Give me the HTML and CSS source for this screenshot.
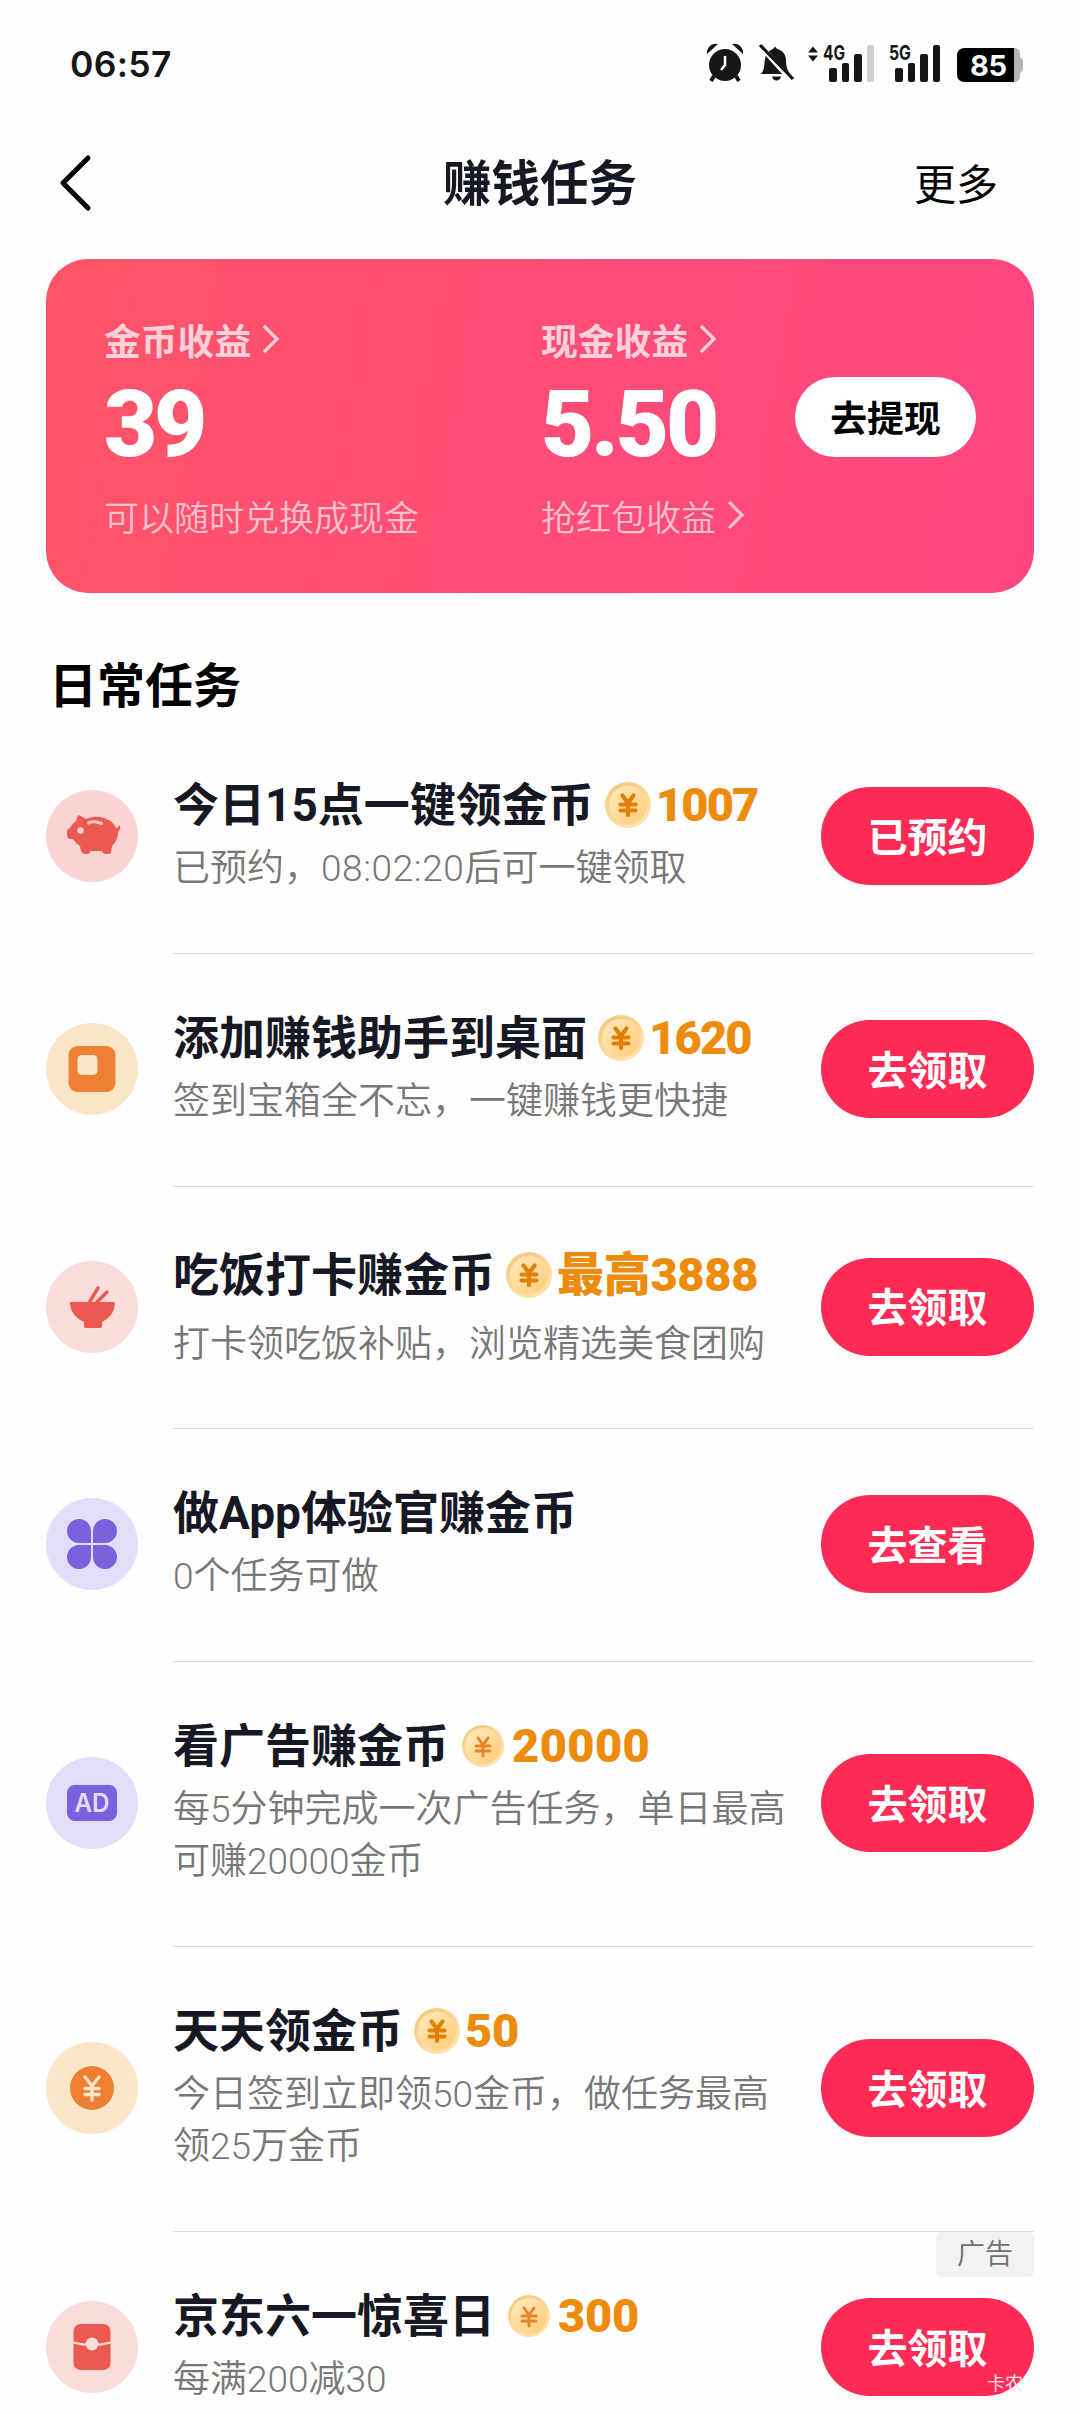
FILE: index.html
```
<!DOCTYPE html>
<html lang="zh-CN">
<head>
<meta charset="utf-8">
<title>赚钱任务</title>
<link rel="stylesheet" href="styles.css">
</head>
<body>
<svg class="defs" width="0" height="0">
  <defs>
    <linearGradient id="coinFace" x1="0" y1="0" x2="1" y2="1">
      <stop offset="0" stop-color="#ffe9bd"/><stop offset="1" stop-color="#ffcb78"/>
    </linearGradient>
    <linearGradient id="coinRim" x1="0" y1="0" x2="0.6" y2="1">
      <stop offset="0" stop-color="#f4c679"/><stop offset="1" stop-color="#ffe3ab"/>
    </linearGradient>
    <symbol id="coin" viewBox="0 0 46 46">
      <circle cx="23" cy="23" r="23" fill="url(#coinRim)"/>
      <circle cx="23" cy="23" r="19" fill="url(#coinFace)"/>
      <path d="M17.500 13.500L23 21L28.500 13.500M15.500 22.500H30.500M15.500 28.500H30.500M23 21V33" fill="none" stroke="#e08008" stroke-width="4.200" stroke-linecap="round" stroke-linejoin="round"/>
    </symbol>
    <symbol id="coin-small" viewBox="0 0 42 42">
      <circle cx="21" cy="21" r="21" fill="url(#coinRim)"/>
      <circle cx="21" cy="21" r="18" fill="url(#coinFace)"/>
      <path d="M16 13L21 20L26 13M14 21H28M14 26H28M21 20V31" fill="none" stroke="#e5862c" stroke-width="3" stroke-linecap="round" stroke-linejoin="round"/>
    </symbol>
    <symbol id="chevron" viewBox="0 0 18 30">
      <path d="M2 2L15 15L2 28" fill="none" stroke="currentColor" stroke-width="3.2"/>
    </symbol>
  </defs>
</svg>

<header class="status">
  <span class="clock">06:57</span>
  <svg class="status-icons" width="320" height="50" viewBox="0 -4 320 50">
    <g fill="#161616">
      <circle cx="19" cy="22" r="16"/>
      <path d="M1 11a9 9 0 0 1 11-10zM37 11a9 9 0 0 0-11-10z"/>
      <path d="M8 33L5 38M30 33L33 38" stroke="#161616" stroke-width="4"/>
      <path d="M19 13v9l-4 5" fill="none" stroke="#fff" stroke-width="2.5"/>
      <path d="M55 31c4-5 3-10 4-15 1-6 5-9 8-10q2-4 4 0c5 1 9 5 9 11 0 6 1 9 4 14z"/>
      <path d="M66 33.500h9q-1 4-4.500 4t-4.500-4z"/>
      <path d="M56 5L85 37" stroke="#fff" stroke-width="5"/>
      <path d="M54 2L87 36" stroke="#161616" stroke-width="3.200"/>
      <path d="M102 9.500l5-6 5 6zM102 12.500l5 6 5-6z"/>
      <rect x="123" y="25" width="8" height="14" rx="2"/><rect x="136" y="20" width="7" height="19" rx="2"/><rect x="148" y="11" width="8" height="28" rx="2"/>
      <rect x="161" y="2" width="7" height="37" rx="2" fill="#cfcfcf"/>
      <rect x="189" y="25" width="8" height="14" rx="2"/><rect x="202" y="20" width="7" height="19" rx="2"/><rect x="214" y="11" width="8" height="28" rx="2"/><rect x="227" y="2" width="7" height="37" rx="2"/>
      <text x="117" y="17" font-size="20" textLength="22" lengthAdjust="spacingAndGlyphs">4G</text>
      <text x="183" y="17" font-size="20" textLength="22" lengthAdjust="spacingAndGlyphs">5G</text>
    </g>
    <path d="M308 5q6 0 6 6v3l3 3v10l-3 3v3q0 6-6 6z" fill="#b4b4b4"/>
    <path d="M259 5h49v34h-49q-8 0-8-8v-18q0-8 8-8z"/>
    <text x="264" y="32.500" fill="#fff" font-size="29" textLength="37">85</text>
  </svg>
</header>

<nav class="navbar">
  <svg class="back" width="34" height="58" viewBox="0 0 34 58"><path d="M29 4L4 29L29 54" fill="none" stroke="#000" stroke-width="5" stroke-linecap="round" stroke-linejoin="round"/></svg>
  <h1>赚钱任务</h1>
  <span class="more">更多</span>
</nav>

<section class="card">
  <div class="col col-coins">
    <div class="label">金币收益<svg class="chev"><use href="#chevron"/></svg></div>
    <div class="value">39</div>
    <div class="note">可以随时兑换成现金</div>
  </div>
  <div class="col">
    <div class="label">现金收益<svg class="chev"><use href="#chevron"/></svg></div>
    <div class="value">5.50</div>
    <div class="note">抢红包收益<svg class="chev"><use href="#chevron"/></svg></div>
  </div>
  <button class="withdraw">去提现</button>
</section>

<h2 class="section-title">日常任务</h2>

<main class="tasks">
  <article class="task">
    <svg class="icon" viewBox="0 0 92 92"><circle cx="46" cy="46" r="46" fill="#fbd3d0"/>
      <path d="M32 25q5 2 8 4Q47 26 54 27Q66 29 70 38q3 0 3-3 2 1 1 4l-2 3q0 9-6 14l-1 6q0 2-3 2h-3q-2 0-3-3H44q0 3-3 3h-3q-2 0-3-3l-1-5q-5-3-7-7h-3q-3-1-3-4v-4q0-2 3-3 2-4 6-7z" fill="#ea5a50"/>
      <circle cx="34.500" cy="40.500" r="3.200" fill="#fbd3d0"/><path d="M42.500 33q6-2.500 13 0.500" fill="none" stroke="#fbc0bb" stroke-width="3" stroke-linecap="round"/></svg>
    <div class="body"><h3>今日15点一键领金币<svg class="coin"><use href="#coin"/></svg><b class="tight">1007</b></h3><p>已预约，<span class="time">08:02:20</span>后可一键领取</p></div>
    <button>已预约</button>
  </article>

  <article class="task">
    <svg class="icon" viewBox="0 0 92 92"><circle cx="46" cy="46" r="46" fill="#fbe5c9"/><rect x="22.500" y="23" width="47" height="46" rx="9" fill="#ed8034"/><rect x="31.500" y="32" width="20" height="20" rx="4.500" fill="#fbe5c9"/></svg>
    <div class="body"><h3>添加赚钱助手到桌面<svg class="coin"><use href="#coin"/></svg><b class="tight">1620</b></h3><p>签到宝箱全不忘，一键赚钱更快捷</p></div>
    <button>去领取</button>
  </article>

  <article class="task tall">
    <svg class="icon" viewBox="0 0 92 92"><circle cx="46" cy="46" r="46" fill="#fadcdb"/><path d="M25 41h42q2 0 2 2-1 12-13 18v4q0 2-2 2H40q-2 0-2-2v-4Q25 55 24 43q-1-2 1-2z" fill="#ea5a50"/><path d="M43.500 41L52 27M51 41L61 31" stroke="#ea5a50" stroke-width="3.500" stroke-linecap="round"/></svg>
    <div class="body"><h3>吃饭打卡赚金币<svg class="coin"><use href="#coin"/></svg><b>最高3888</b></h3><p>打卡领吃饭补贴，浏览精选美食团购</p></div>
    <button>去领取</button>
  </article>

  <article class="task">
    <svg class="icon" viewBox="0 0 92 92"><circle cx="46" cy="46" r="46" fill="#e2ddf9"/><path d="M45 45H33a12 12 0 1 1 12-12zM47 45H59a12 12 0 1 0-12-12zM45 47H33a12 12 0 1 0 12 12zM47 47H59a12 12 0 1 1-12 12z" fill="#7a61de"/></svg>
    <div class="body"><h3>做App体验官赚金币</h3><p>0个任务可做</p></div>
    <button>去查看</button>
  </article>

  <article class="task">
    <svg class="icon" viewBox="0 0 92 92"><circle cx="46" cy="46" r="46" fill="#e2ddf9"/><rect x="21" y="28" width="50" height="36" rx="8" fill="#7a61de"/><text x="28.500" y="55" font-size="25" textLength="35" lengthAdjust="spacingAndGlyphs" fill="#e2ddf9">AD</text></svg>
    <div class="body"><h3>看广告赚金币<svg class="coin small"><use href="#coin-small"/></svg><b class="wide">20000</b></h3><p>每5分钟完成一次广告任务，单日最高<br>可赚20000金币</p></div>
    <button>去领取</button>
  </article>

  <article class="task">
    <svg class="icon" viewBox="0 0 92 92"><circle cx="46" cy="46" r="46" fill="#fbe5c9"/><circle cx="46" cy="46" r="22" fill="#ed8034"/><path d="M39 35L46 44L53 35M39 46.500H53M39 52.500H53M46 44V58" fill="none" stroke="#fbe5c9" stroke-width="3.400" stroke-linecap="round" stroke-linejoin="round"/></svg>
    <div class="body"><h3>天天领金币<svg class="coin"><use href="#coin"/></svg><b>50</b></h3><p>今日签到立即领50金币，做任务最高<br>领25万金币</p></div>
    <button>去领取</button>
  </article>

  <article class="task">
    <span class="ad">广告</span>
    <svg class="icon" viewBox="0 0 92 92"><circle cx="46" cy="46" r="46" fill="#fadcdb"/><rect x="27.500" y="23" width="37" height="46" rx="7" fill="#ea5a50"/><path d="M27 41.500Q46 46.500 65 41.500" fill="none" stroke="#fadcdb" stroke-width="2.200"/><circle cx="46" cy="43" r="6.500" fill="#fadcdb"/></svg>
    <div class="body"><h3>京东六一惊喜日<svg class="coin small"><use href="#coin-small"/></svg><b>300</b></h3><p>每满200减30</p></div>
    <button>去领取</button>
    <span class="mark">卡农</span>
  </article>
</main>
</body>
</html>
```
FILE: styles.css
```
* { box-sizing: border-box; margin: 0; padding: 0; }

body {
  width: 1080px;
  height: 2414px;
  overflow: hidden;
  background: #fefefe;
  color: #161823;
  font-family: Roboto, "Noto Sans CJK SC", sans-serif;
}

.defs { position: absolute; }

button {
  border: 0;
  font-family: inherit;
  font-weight: 700;
  white-space: nowrap;
}

.status {
  display: flex;
  justify-content: space-between;
  align-items: center;
  height: 128px;
  padding: 0 54px 0 70px;
}
.clock {
  font-family: Inter, sans-serif;
  font-size: 35.500px;
  font-weight: 600;
  letter-spacing: 0.3px;
  color: #161616;
}
.status-icons { font-family: Inter, sans-serif; font-weight: 700; }

.navbar {
  display: grid;
  grid-template-columns: 1fr auto 1fr;
  align-items: center;
  height: 110px;
  padding: 0 82px 0 59px;
}
.navbar h1 { margin: 3px 0 0 23px; font-size: 48.500px; line-height: 60px; }
.navbar .more { justify-self: end; padding-bottom: 4px; font-size: 42px; color: #000; }

.card {
  display: flex;
  height: 334px;
  margin: 21px 46px 0;
  padding: 52px 58px 0 58px;
  border-radius: 42px;
  background: linear-gradient(100deg, #ff5468 0%, #ff4e76 45%, #ff4580 100%);
  color: #fff;
}
.col { flex: 1; }
.col-coins { flex: 0 0 437px; }
.label, .note { display: flex; align-items: center; }
.label { height: 56px; font-size: 36.800px; font-weight: 700; color: #ffd0da; }
.value { height: 115px; line-height: 115px; font-size: 92px; font-weight: 900; letter-spacing: -3.200px; }
.note { height: 66px; font-size: 35px; font-weight: 350; color: #ffc0cd; }
.chev { width: 18px; height: 30px; margin-left: 11px; }
.withdraw {
  flex: none;
  width: 181px;
  height: 80px;
  margin-top: 66px;
  padding-bottom: 3px;
  border-radius: 40px;
  background: #fff;
  color: #000;
  font-size: 36.800px;
}

.section-title {
  height: 127px;
  padding: 64px 0 0 49px;
  font-size: 48px;
  line-height: 60px;
  color: #000;
}

.task {
  position: relative;
  display: flex;
  align-items: center;
  height: 233px;
  padding: 0 46px 1px;
}
.task:nth-child(5), .task:nth-child(6) { height: 285px; }
.task.tall { height: 242px; }
.task:not(:last-child)::after {
  content: "";
  position: absolute;
  right: 46px;
  bottom: -1px;
  left: 173px;
  height: 1px;
  background: #dcdcdc;
}
.icon {
  flex: none;
  width: 92px;
  height: 92px;
  margin-right: 35px;
  font-family: Inter, sans-serif;
  font-weight: 600;
}
.body { flex: 1; padding-top: 2px; white-space: nowrap; }
.body h3 {
  display: flex;
  align-items: center;
  height: 52px;
  margin-bottom: 12px;
  font-size: 46px;
  line-height: 52px;
}
.body p { font-size: 37px; line-height: 52px; font-weight: 350; color: #777; }
.time { letter-spacing: 0.600px; }
.tall h3 { height: 61px; margin-bottom: 13px; }
.coin { width: 46px; height: 46px; margin: 0 5px 0 11px; }
.coin.small { width: 42px; height: 42px; margin: 0 8px 0 13px; }
.body b { color: #ed8c0c; font-size: 47px; letter-spacing: -0.300px; }
.body b.tight { letter-spacing: -1.800px; }
.body b.wide { letter-spacing: 0.400px; }
.task button {
  flex: none;
  width: 213px;
  height: 98px;
  padding-bottom: 3px;
  border-radius: 49px;
  background: #fe2c55;
  color: #fff;
  font-size: 40px;
}
.ad {
  position: absolute;
  top: 1px;
  right: 46px;
  width: 98px;
  height: 45px;
  border-radius: 6px;
  background: #f2f2f2;
  color: #6f6f6f;
  font-size: 28px;
  font-weight: 350;
  line-height: 45px;
  text-align: center;
}
.mark {
  position: absolute;
  left: 987px;
  top: 140px;
  color: #ffe4ea;
  font-size: 18px;
  line-height: 26px;
}
```
